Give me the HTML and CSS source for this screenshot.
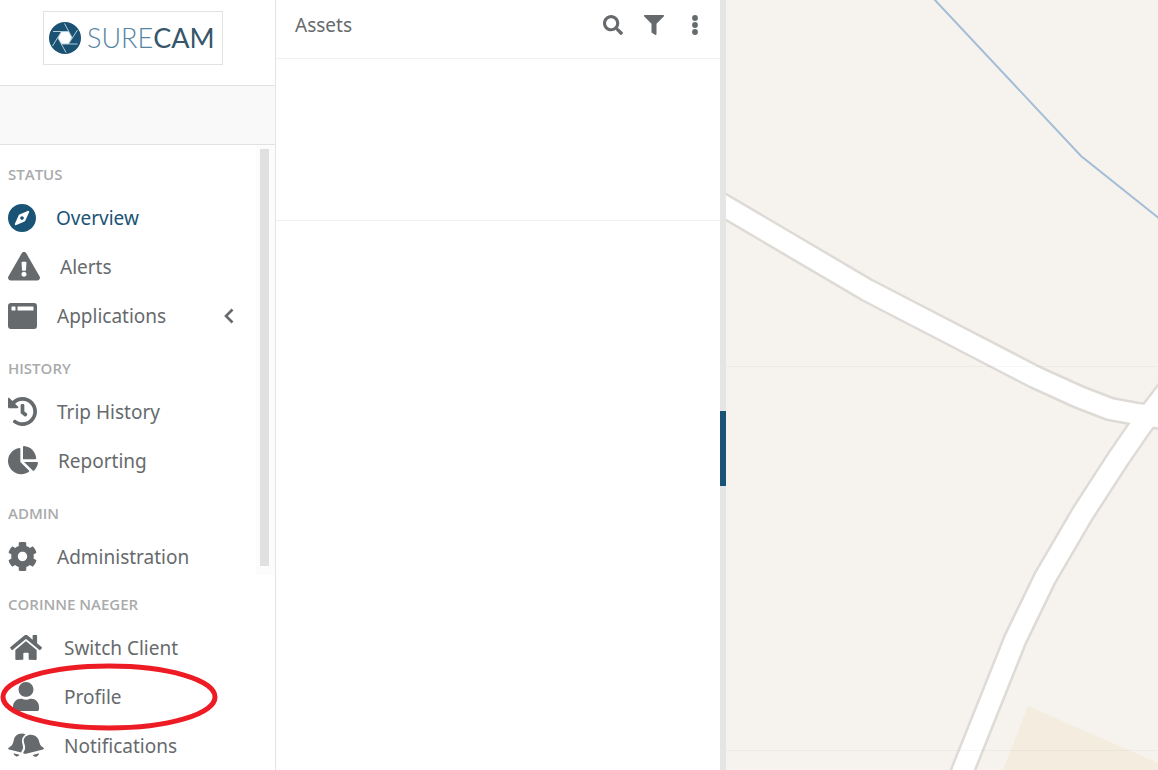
FILE: index.html
```html
<!DOCTYPE html>
<html lang="en">
<head>
<meta charset="utf-8">
<title>SureCam</title>
<link rel="stylesheet" href="styles.css">
</head>
<body>
<div class="app">
  <aside class="sidebar">
    <div class="brand">
      <a class="logo" href="#" aria-label="SureCam home">
        <svg class="logo-mark" viewBox="0 0 32 32" aria-hidden="true">
          <circle cx="16" cy="16" r="16" fill="#1b5273"/>
          <path d="M12.500 9.500L19.500 9.500L23 15.500L19.500 22L12.500 22L9 16Z" fill="#fff"/>
          <path d="M19.500 9.500H4M23 15.500L15.500 1.500M19.500 22L28.500 8M12.500 22H28.500M9 16L17 30.500M12.500 9.500L3.500 24" fill="none" stroke="#b4cddb" stroke-width="1"/>
        </svg>
        <span class="logo-text"><span class="logo-sure">SURE</span><span class="logo-cam">CAM</span></span>
      </a>
    </div>
    <div class="subheader"></div>
    <div class="nav-scroll">
      <nav class="nav" aria-label="Main">
        <h2 class="nav-heading">STATUS</h2>
        <a class="nav-item active" href="#"><svg class="i28" viewBox="0 8 496 496"><path d="M225.380 233.370c-12.500 12.500-12.500 32.760 0 45.250 12.490 12.500 32.760 12.500 45.250 0 12.500-12.500 12.500-32.760 0-45.250-12.500-12.490-32.760-12.490-45.250 0zM248 8C111.030 8 0 119.030 0 256s111.030 248 248 248 248-111.030 248-248S384.970 8 248 8zm126.140 148.050L308.170 300.400a31.938 31.938 0 0 1-15.770 15.770l-144.340 65.970c-16.650 7.610-33.810-9.550-26.200-26.200l65.980-144.350a31.938 31.938 0 0 1 15.770-15.770l144.340-65.970c16.650-7.600 33.800 9.550 26.190 26.200z"/></svg><span>Overview</span></a>
        <a class="nav-item" href="#"><svg class="i32" viewBox="0 0 576 512"><path d="M569.517 440.013C587.975 472.007 564.806 512 527.940 512H48.054c-36.937 0-59.999-40.055-41.577-71.987L246.423 23.985c18.467-32.009 64.720-31.951 83.154 0l239.940 416.028zM288 354c-25.405 0-46 20.595-46 46s20.595 46 46 46 46-20.595 46-46-20.595-46-46-46zm-43.673-165.346l7.418 136c.347 6.364 5.609 11.346 11.982 11.346h48.546c6.373 0 11.635-4.982 11.982-11.346l7.418-136c.375-6.874-5.098-12.654-11.982-12.654h-63.383c-6.884 0-12.356 5.780-11.981 12.654z"/></svg><span>Alerts</span></a>
        <a class="nav-item" href="#" aria-expanded="false"><svg class="i29" viewBox="0 0 29 26"><path fill-rule="evenodd" d="M3 0H26Q29 0 29 3V23Q29 26 26 26H3Q0 26 0 23V3Q0 0 3 0ZM4 3.500Q3.500 3.500 3.500 4V7Q3.500 7.500 4 7.500H7Q7.500 7.500 7.500 7V4Q7.500 3.500 7 3.500ZM10 3.500Q9.500 3.500 9.500 4V7Q9.500 7.500 10 7.500H25Q25.500 7.500 25.500 7V4Q25.500 3.500 25 3.500Z"/></svg><span>Applications</span><svg class="chevron" viewBox="0 0 10 16"><path d="M8.500 1.500L2 8l6.500 6.500" fill="none" stroke="currentColor" stroke-width="2.600"/></svg></a>
        <h2 class="nav-heading">HISTORY</h2>
        <a class="nav-item" href="#"><svg class="i29" viewBox="8 8 496 496"><path d="M504 255.531c.253 136.640-111.180 248.372-247.820 248.468-59.015.042-113.223-20.530-155.822-54.911-11.077-8.940-11.905-25.541-1.839-35.607l11.267-11.267c8.609-8.609 22.353-9.551 31.891-1.984C173.062 425.135 212.781 440 256 440c101.705 0 184-82.311 184-184 0-101.705-82.311-184-184-184-48.814 0-93.149 18.969-126.068 49.932l50.754 50.754c10.080 10.080 2.941 27.314-11.313 27.314H24c-8.837 0-16-7.163-16-16V38.627c0-14.254 17.234-21.393 27.314-11.314l49.372 49.372C129.209 34.136 189.552 8 256 8c136.810 0 247.747 110.780 248 247.531zm-180.912 78.784l9.823-12.630c8.138-10.463 6.253-25.542-4.210-33.679L288 256.349V152c0-13.255-10.745-24-24-24h-16c-13.255 0-24 10.745-24 24v135.651l65.409 50.874c10.463 8.137 25.541 6.253 33.679-4.210z"/></svg><span>Trip History</span></a>
        <a class="nav-item" href="#"><svg class="i30" viewBox="0 0 544 512"><path d="M527.790 288H290.500l158.030 158.030c6.040 6.040 15.980 6.530 22.190.680 38.700-36.460 65.320-85.610 73.130-140.860 1.340-9.460-6.510-17.850-16.060-17.850zm-15.830-64.800C503.720 103.740 408.260 8.280 288.800.040 279.680-.590 272 7.100 272 16.240V240h223.770c9.140 0 16.820-7.680 16.190-16.800zM224 288V50.710c0-9.550-8.390-17.400-17.840-16.060C86.990 51.490-4.100 155.600.140 280.370 4.500 408.510 114.830 513.590 243.030 511.980c50.400-.630 96.970-16.870 135.260-44.030 7.900-5.600 8.420-17.230 1.570-24.080L224 288z"/></svg><span>Reporting</span></a>
        <h2 class="nav-heading">ADMIN</h2>
        <a class="nav-item" href="#"><svg class="i29" viewBox="8 8 496 496"><path d="M487.400 315.700l-42.600-24.600c4.300-23.200 4.300-47 0-70.200l42.600-24.600c4.900-2.800 7.100-8.600 5.500-14-11.100-35.600-30-67.800-54.700-94.600-3.800-4.100-10-5.100-14.800-2.300L380.800 110c-17.900-15.400-38.500-27.300-60.800-35.100V25.800c0-5.600-3.900-10.500-9.400-11.700-36.700-8.200-74.300-7.800-109.200 0-5.500 1.200-9.400 6.100-9.400 11.700V75c-22.200 7.900-42.800 19.800-60.800 35.100L88.700 85.500c-4.900-2.800-11-1.900-14.800 2.300-24.700 26.700-43.600 58.900-54.700 94.600-1.700 5.400.6 11.200 5.500 14L67.300 221c-4.300 23.200-4.300 47 0 70.200l-42.600 24.600c-4.900 2.800-7.100 8.600-5.500 14 11.100 35.600 30 67.800 54.700 94.600 3.800 4.100 10 5.100 14.800 2.300l42.600-24.600c17.900 15.400 38.500 27.300 60.800 35.100v49.200c0 5.600 3.900 10.500 9.400 11.700 36.700 8.200 74.300 7.800 109.200 0 5.500-1.200 9.400-6.100 9.400-11.700v-49.200c22.200-7.900 42.800-19.800 60.800-35.100l42.600 24.600c4.900 2.800 11 1.900 14.800-2.300 24.700-26.700 43.600-58.900 54.700-94.600 1.500-5.500-.7-11.300-5.600-14.100zM256 336c-44.100 0-80-35.900-80-80s35.900-80 80-80 80 35.900 80 80-35.900 80-80 80z"/></svg><span>Administration</span></a>
      </nav>
      <div class="scroll-track"><div class="scroll-thumb"></div></div>
    </div>
    <nav class="user-nav" aria-label="Account">
      <h2 class="nav-heading">CORINNE NAEGER</h2>
      <a class="nav-item" href="#"><span class="slot"><svg class="i32" viewBox="0 32 576 448"><path d="M280.370 148.260L96 300.110V464a16 16 0 0 0 16 16l112.060-.290a16 16 0 0 0 15.920-16V368a16 16 0 0 1 16-16h64a16 16 0 0 1 16 16v95.640a16 16 0 0 0 16 16.050L464 480a16 16 0 0 0 16-16V300L295.670 148.260a12.190 12.190 0 0 0-15.300 0zM571.600 251.470L488 182.560V44.050a12 12 0 0 0-12-12h-56a12 12 0 0 0-12 12v72.610L318.470 43a48 48 0 0 0-61 0L4.340 251.470a12 12 0 0 0-1.600 16.900l25.500 31A12 12 0 0 0 45.150 301l235.220-193.740a12.190 12.190 0 0 1 15.300 0L530.900 301a12 12 0 0 0 16.900-1.600l25.500-31a12 12 0 0 0-1.700-16.930z"/></svg></span><span>Switch Client</span></a>
      <a class="nav-item highlighted" href="#"><span class="slot"><svg class="i26" viewBox="0 0 448 512"><path d="M224 256c70.700 0 128-57.300 128-128S294.700 0 224 0 96 57.300 96 128s57.300 128 128 128zm89.600 32h-16.700c-22.200 10.200-46.900 16-72.900 16s-50.600-5.800-72.900-16h-16.700C60.200 288 0 348.200 0 422.400V464c0 26.500 21.500 48 48 48h352c26.500 0 48-21.500 48-48v-41.600c0-74.200-60.200-134.400-134.400-134.400z"/></svg></span><span>Profile</span>
        <svg class="ring" viewBox="0 0 218 68" aria-hidden="true"><ellipse cx="109" cy="34" rx="106" ry="31" fill="none" stroke="#ed1c24" stroke-width="5"/></svg></a>
      <a class="nav-item" href="#"><span class="slot"><svg class="i36" viewBox="0 0 36 26"><path d="M14 .4C9 .4 6.500 3.500 5.800 7C5 11.500 3.500 13 1 14.500Q-.6 15.800 1 16.500L13.300 19.500C13.300 18.500 14 17.500 14.800 16C15.500 14 14.300 11 14 8.500C13.700 5.500 15.300 3 17.500 1.500Q16 .4 14 .4ZM5.500 20.200L11.500 21.700Q10.500 23.800 8.300 23.400Q5.800 22.700 5.500 20.200Z"/><path d="M20.500 2C25.500.7 30 3.800 31 8C32 12 33 13.300 35.200 14.500Q36.800 15.600 35 16.500L18 20.700Q15 21.300 15.300 19.500C16.500 17.500 17.500 16 17 13C16.300 10 15.300 8.500 15.800 6Q17 3 20.500 2ZM24.700 21.900L31 20.300Q31 22.800 28.500 23.800Q26 24.200 24.700 21.900Z"/></svg></span><span>Notifications</span></a>
    </nav>
  </aside>

  <section class="assets">
    <header class="assets-header">
      <h1 class="assets-title">Assets</h1>
      <div class="tools">
        <button type="button" aria-label="Search"><svg class="i20" viewBox="0 0 512 512"><path d="M505 442.700L405.300 343c-4.500-4.500-10.600-7-17-7H372c27.600-35.300 44-79.700 44-128C416 93.100 322.900 0 208 0S0 93.100 0 208s93.100 208 208 208c48.300 0 92.700-16.400 128-44v16.300c0 6.400 2.500 12.500 7 17l99.700 99.700c9.400 9.400 24.600 9.400 33.900 0l28.300-28.300c9.400-9.400 9.400-24.600.1-34zM208 336c-70.700 0-128-57.200-128-128 0-70.700 57.200-128 128-128 70.700 0 128 57.200 128 128 0 70.700-57.200 128-128 128z"/></svg></button>
        <button type="button" aria-label="Filter"><svg class="i20" viewBox="0 0 512 512"><path d="M487.976 0H24.028C2.710 0-8.047 25.866 7.058 40.971L192 225.941V432c0 7.831 3.821 15.170 10.237 19.662l80 55.980C298.020 518.690 320 507.493 320 487.980V225.941l184.947-184.970C520.021 25.896 509.338 0 487.976 0z"/></svg></button>
        <button type="button" aria-label="More"><svg class="i20" viewBox="0 0 20 20"><circle cx="10" cy="3" r="2.900"/><circle cx="10" cy="10" r="2.900"/><circle cx="10" cy="17" r="2.900"/></svg></button>
      </div>
    </header>
    <div class="assets-summary"></div>
    <div class="assets-list"></div>
  </section>

  <div class="splitter"><div class="grip"></div></div>

  <main class="map" aria-label="Map">
    <svg class="map-canvas" viewBox="0 0 432 770" preserveAspectRatio="xMinYMin slice" aria-hidden="true">
      <path d="M302 706L432 763V770H277Z" fill="#f3ecdf"/>
      <path d="M207 -2L355 156L434 219" fill="none" stroke="#a3bdd6" stroke-width="2"/>
      <g fill="none" stroke-linejoin="round">
        <g stroke="#dedbd6" stroke-width="25">
          <path d="M-10 201L0 207L141 290L309 377L353 397L384 409L411 414L450 420"/>
          <path d="M450 380L414 427L392 459L357 513L319 578L289 640L237 770L233 780"/>
        </g>
        <g stroke="#fff" stroke-width="20">
          <path d="M-10 201L0 207L141 290L309 377L353 397L384 409L411 414L450 420"/>
          <path d="M450 380L414 427L392 459L357 513L319 578L289 640L237 770L233 780"/>
        </g>
      </g>
      <path d="M0 366.500H432M0 750.500H432" stroke="#000" stroke-opacity=".03"/>
    </svg>
  </main>
</div>
</body>
</html>
```
FILE: styles.css
```css
* {
  box-sizing: border-box;
}

body {
  margin: 0;
  font-family: "Noto Sans", "Open Sans", sans-serif;
  color: #666a6d;
  background: #fff;
}

.app {
  display: grid;
  grid-template-columns: 276px minmax(0, 444fr) 6px minmax(0, 432fr);
  height: 100vh;
  overflow: hidden;
}

svg {
  display: block;
  flex: none;
  fill: currentColor;
}

.sidebar {
  display: flex;
  flex-direction: column;
  min-height: 0;
  border-right: 1px solid #e4e4e4;
}

.brand {
  flex: none;
  padding: 11px 0 20px 43px;
}

.logo {
  display: flex;
  align-items: center;
  gap: 6px;
  width: 180px;
  height: 54px;
  padding-left: 5px;
  border: 1px solid #e2e2e2;
  text-decoration: none;
}

.logo-mark {
  width: 32px;
  height: 32px;
}

.logo-text {
  font-family: Lato, sans-serif;
  font-size: 27px;
  line-height: 32px;
}

.logo-sure {
  font-weight: 300;
  color: #5585a3;
}

.logo-cam {
  color: #36566b;
}

.subheader {
  flex: none;
  height: 60px;
  border-top: 1px solid #e2e2e2;
  border-bottom: 1px solid #e2e2e2;
  background: #f9f9f9;
}

.nav-scroll {
  display: flex;
  flex: 1;
  min-height: 0;
  overflow: hidden;
}

.nav {
  flex: 1;
  padding-top: 10px;
}

.scroll-track {
  width: 19px;
  padding: 4px 6px 9px 4px;
  background: #fcfcfc;
}

.scroll-thumb {
  height: 100%;
  background: #e0e0e0;
}

.nav-heading {
  margin: 9px 0 0;
  padding-left: 8px;
  font-family: "Open Sans", "Noto Sans", sans-serif;
  font-size: 15px;
  font-weight: 600;
  line-height: 38px;
  color: #a9abac;
}

.nav-heading:first-child {
  margin-top: 0;
}

.nav-item {
  display: flex;
  position: relative;
  align-items: center;
  gap: 20px;
  height: 49px;
  padding-left: 8px;
  font-size: 19px;
  line-height: 24px;
  color: inherit;
  text-decoration: none;
}

.nav-item.active {
  color: #195375;
}

.chevron {
  width: 10px;
  height: 16px;
  margin-left: auto;
  margin-right: 22px;
}

.user-nav {
  flex: none;
  padding-top: 10px;
}

.slot {
  display: flex;
  justify-content: center;
  width: 36px;
}

.ring {
  position: absolute;
  z-index: 1;
  top: -9px;
  left: 0;
  width: 218px;
  height: 68px;
}

.i20 { width: 20px; }
.i26 { width: 26px; }
.i28 { width: 28px; }
.i29 { width: 29px; }
.i30 { width: 30px; }
.i32 { width: 32px; }
.i36 { width: 36px; }

.assets {
  display: flex;
  flex-direction: column;
}

.assets-header {
  display: flex;
  align-items: center;
  justify-content: space-between;
  height: 59px;
  padding: 0 15px 8px 19px;
  border-bottom: 1px solid #f0f0f0;
}

.assets-title {
  margin: 0;
  font-size: 19px;
  font-weight: 400;
  line-height: 24px;
}

.tools {
  display: flex;
  gap: 21px;
}

.tools button {
  padding: 0;
  border: 0;
  background: none;
  color: inherit;
}

.assets-summary {
  height: 162px;
  border-bottom: 1px solid #f0f0f0;
}

.assets-list {
  flex: 1;
}

.splitter {
  display: flex;
  flex-direction: column;
  justify-content: center;
  padding-top: 127px;
  background: #e5e5e5;
}

.grip {
  height: 75px;
  background: #195375;
}

.map {
  overflow: hidden;
  background: #f6f3ee;
}

.map-canvas {
  width: 100%;
  height: 100%;
}
```
